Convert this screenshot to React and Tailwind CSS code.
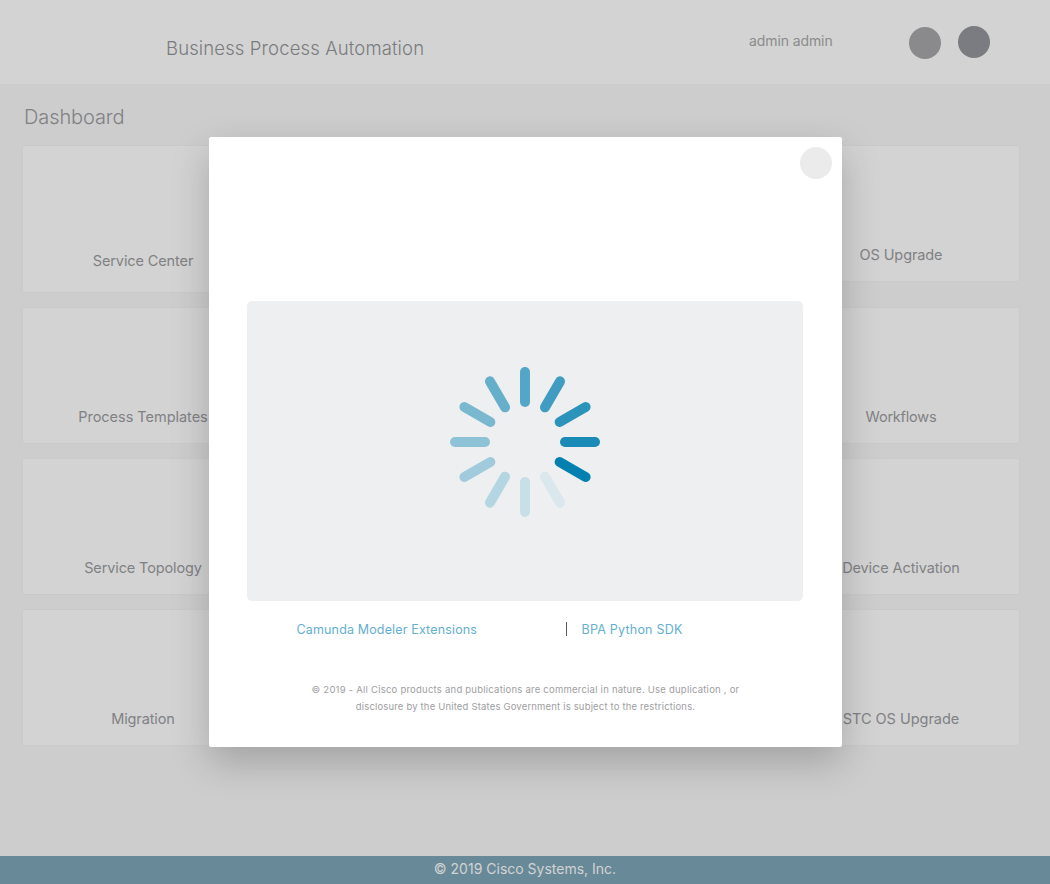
const leftCards = [
  { label: 'Service Center', box: 'h-[146px] pb-[21px]', text: 'tracking-[-0.11px]' },
  { label: 'Process Templates', box: 'h-[135px] pb-4', text: 'tracking-[-0.03px]' },
  { label: 'Service Topology', box: 'h-[135px] pb-4', text: 'tracking-[-0.12px]' },
  { label: 'Migration', box: 'h-[135px] pb-4', text: 'tracking-[-0.12px]' },
];

const rightCards = [
  { label: 'OS Upgrade', box: 'mb-[11px] h-[135px] pb-4', text: 'tracking-[-0.1px]' },
  { label: 'Workflows', box: 'h-[135px] pb-4', text: 'tracking-[-0.2px]' },
  { label: 'Device Activation', box: 'h-[135px] pb-4', text: 'tracking-[-0.1px]' },
  { label: 'STC OS Upgrade', box: 'h-[135px] pb-4', text: 'tracking-[-0.03px]' },
];

// Clockwise from the top spoke.
const spokes = [
  '#54a6c7', '#409cc1', '#2c94bb', '#1a8ab7', '#0281b0', '#dae8ed',
  '#c8dfe7', '#b3d6e2', '#a2cadd', '#8dc2d7', '#7ab8d0', '#66afcb',
];

function Column({ cards, width }) {
  return (
    <div className={`flex flex-col gap-4 ${width}`}>
      {cards.map((c) => (
        <div
          key={c.label}
          className={`flex shrink-0 items-end justify-center rounded-[1px] bg-[#d3d3d3] shadow-[0_0_2px_rgba(0,0,0,0.05)] ${c.box}`}
        >
          <span className={`whitespace-nowrap text-[14.5px] leading-5 text-[#808184] ${c.text}`}>{c.label}</span>
        </div>
      ))}
    </div>
  );
}

function Spinner() {
  return (
    <svg width="150" height="150" viewBox="0 0 150 150">
      {spokes.map((color, i) => (
        <rect key={color} x="70" y="0" width="10" height="40" rx="5" fill={color} transform={`rotate(${i * 30} 75 75)`} />
      ))}
    </svg>
  );
}

function Modal() {
  return (
    <div className="absolute left-[209px] top-[137px] flex h-[610px] w-[633px] flex-col rounded-[2px] bg-white shadow-[0_15px_38px_rgba(0,0,0,0.21)]">
      <div className="flex h-[164px] justify-end pr-2.5 pt-2.5">
        <button className="size-8 rounded-full bg-[#ebebeb]" aria-label="Close" />
      </div>
      <div className="ml-[38px] mr-[39px] flex h-[300px] items-center justify-center rounded-[5px] bg-[#eeeff1]">
        <div className="-mt-[18px]">
          <Spinner />
        </div>
      </div>
      <div className="mt-[18px] flex h-5 items-center pl-[87.5px] text-[12.5px] text-[#64afd1]">
        <span className="w-[269.5px] whitespace-nowrap pt-0.5 tracking-[0.15px]">Camunda Modeler Extensions</span>
        <span className="h-3.5 w-px bg-[#58585b]" />
        <span className="ml-[14.5px] whitespace-nowrap pt-0.5 tracking-[0.23px]">BPA Python SDK</span>
      </div>
      <p className="mt-[42px] text-center text-[9.5px] leading-[17px] text-[#9e9ea2]">
        <span className="tracking-[0.23px]">
          © 2019 - All Cisco products and publications are commercial in nature. Use duplication , or
        </span>
        <br />
        <span className="tracking-[0.17px]">
          disclosure by the United States Government is subject to the restrictions.
        </span>
      </p>
    </div>
  );
}

export default function App() {
  return (
    <div className="relative flex h-[884px] w-[1050px] flex-col overflow-hidden bg-[#cdcdcd] font-['Inter','Liberation_Sans',sans-serif]">
      <header className="flex h-[84px] shrink-0 bg-[#d3d3d3]">
        <h1 className="ml-[166px] mt-9 w-[583px] whitespace-nowrap text-[18.5px] font-light leading-6 tracking-[0.13px] text-[#7a7b7e]">
          Business Process Automation
        </h1>
        <span className="mt-[31px] w-[160px] whitespace-nowrap text-sm leading-5 tracking-[-0.1px] text-[#8a8c8c]">admin admin</span>
        <span className="mt-[27px] size-8 rounded-full bg-[#8a8a8c]" />
        <span className="ml-[17px] mt-[26px] size-8 rounded-full bg-[#7b7c81]" />
      </header>
      <main className="flex-1">
        <h2 className="ml-6 mt-5 h-[42px] text-[20px] font-light leading-[26px] tracking-[-0.1px] text-[#808184]">Dashboard</h2>
        <div className="ml-[23px] mr-[31px] flex justify-between">
          <Column cards={leftCards} width="w-[240px]" />
          <Column cards={rightCards} width="w-[236px]" />
        </div>
      </main>
      <footer className="flex h-7 shrink-0 items-start justify-center bg-[#688998] pt-[3px] text-sm text-[#d3d3d3]">
        <span>© 2019 Cisco Systems, Inc.</span>
      </footer>
      <Modal />
    </div>
  );
}
